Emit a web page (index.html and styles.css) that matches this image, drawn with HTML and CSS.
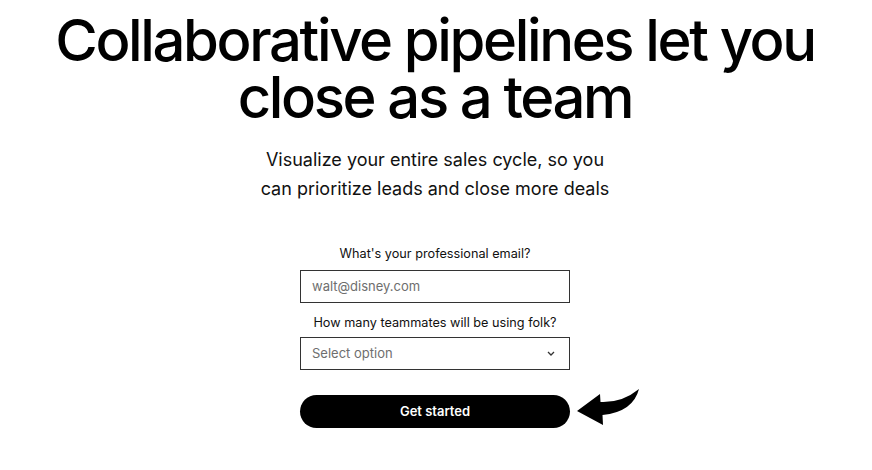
FILE: index.html
```html
<!DOCTYPE html>
<html lang="en">
<head>
<meta charset="utf-8">
<title>Collaborative pipelines</title>
<link rel="stylesheet" href="styles.css">
</head>
<body>
<main class="hero">
  <h1 class="title">Collaborative pipelines let you close as a team</h1>
  <p class="subtitle">Visualize your entire sales cycle, so you can prioritize leads and close more deals</p>
  <form class="signup">
    <label class="label" for="email">What's your professional email?</label>
    <input class="field" id="email" type="email" placeholder="walt@disney.com">
    <label class="label label-second" for="team">How many teammates will be using folk?</label>
    <div class="select">
      <span class="select-text">Select option</span>
      <svg class="chevron" width="8" height="5" viewBox="0 0 8 5"><path d="M1 1 L4 4 L7 1" fill="none" stroke="#333" stroke-width="1.3"/></svg>
    </div>
    <div class="button-row">
      <button class="cta" type="button">Get started</button>
      <svg class="arrow" width="66" height="40" viewBox="0 0 66 40"><path d="M1 23 L24 6 L24.5 14 Q46 15 63 1 Q57 24 26.5 27 L27 37 Z" fill="#000"/></svg>
    </div>
  </form>
</main>
</body>
</html>
```
FILE: styles.css
```css
* { box-sizing: border-box; }
html, body { margin: 0; padding: 0; background: #fff; }
body {
  font-family: Inter, "Noto Sans", sans-serif;
  color: #000;
  width: 870px;
}
.hero {
  display: flex;
  flex-direction: column;
  align-items: center;
  padding-top: 12px;
}
.title {
  margin: 0;
  max-width: 790px;
  text-align: center;
  font-size: 58px;
  line-height: 57px;
  font-weight: 500;
  letter-spacing: -0.041em;
}
.subtitle {
  margin: 20px 0 0;
  max-width: 370px;
  text-align: center;
  font-size: 18px;
  line-height: 28.8px;
  color: #111;
}
.signup {
  margin-top: 42px;
  width: 270px;
  display: flex;
  flex-direction: column;
  align-items: stretch;
}
.label {
  font-size: 12.7px;
  line-height: 16px;
  text-align: center;
  color: #111;
  margin-bottom: 8px;
}
.label-second { margin-top: 12px; margin-bottom: 6px; }
.field, .select {
  height: 33px;
  border: 1px solid #333;
  border-radius: 0;
  padding: 0 11px;
  font-family: Inter, sans-serif;
  font-size: 13px;
  color: #111;
  background: #fff;
  outline: none;
}
.field::placeholder { color: #6e6e6e; }
.select {
  display: flex;
  align-items: center;
  justify-content: space-between;
  padding-right: 14px;
}
.select-text { color: #6e6e6e; }
.button-row {
  position: relative;
  margin-top: 25px;
}
.cta {
  width: 100%;
  height: 33px;
  border: 0;
  border-radius: 17px;
  background: #000;
  color: #fff;
  font-family: Inter, sans-serif;
  font-size: 13px;
  font-weight: 600;
}
.arrow {
  position: absolute;
  left: 276px;
  top: -7px;
}
```
